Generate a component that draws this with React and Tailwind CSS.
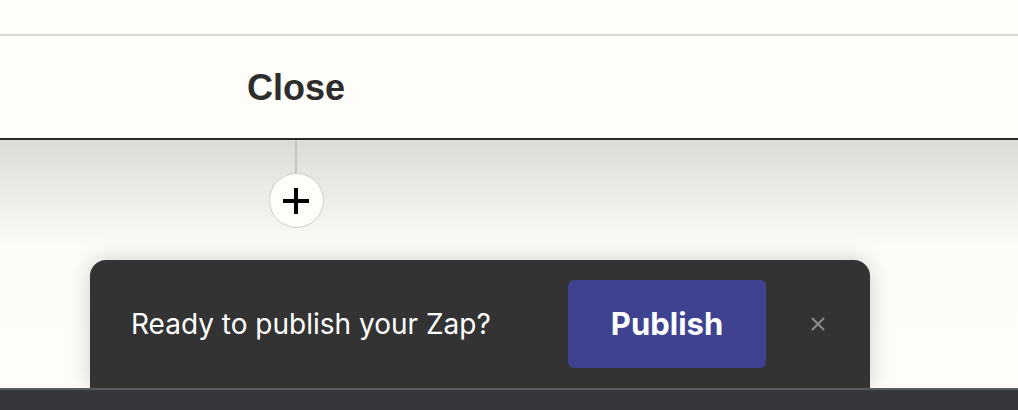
export default function App() {
  return (
    <div
      className="relative h-[410px] w-[1018px] overflow-hidden bg-[#fffdf9]"
      style={{ fontFamily: "Inter, 'Liberation Sans', sans-serif" }}
    >
      <div className="h-[36px] border-b-2 border-[#d6d5d1]" />

      <div className="flex h-[104px] border-b-2 border-[#2a2a28]">
        <div className="flex w-[592px] items-center justify-center pt-[2px]">
          <span
            className="text-[36px] font-bold text-[#2d2d2d]"
            style={{ fontFamily: "'Liberation Sans', Arial, sans-serif" }}
          >
            Close
          </span>
        </div>
      </div>

      <div className="h-[270px] bg-gradient-to-b from-[#dcdbd7] via-[#fdfcf8] via-40% to-[#fffdf9]">
        <div className="flex w-[592px] flex-col items-center">
          <div className="h-[33px] w-[2px] bg-[#c4c4c2]" />
          <div className="flex h-[55px] w-[55px] items-center justify-center rounded-full border-[1.5px] border-[#cfcecb] bg-[#fffdf9]">
            <svg width="34" height="34" viewBox="0 0 34 34" fill="none">
              <path d="M17 4V30M4 17H30" stroke="#000" strokeWidth="4" />
            </svg>
          </div>
        </div>
      </div>

      <div className="absolute left-[90px] top-[260px] flex h-[128px] w-[780px] items-start rounded-t-[16px] bg-[#333333] pt-5 pl-[41px] shadow-[0_0_24px_rgba(0,0,0,0.18)]">
        <div className="flex h-[88px] flex-1 items-center text-[28px] text-white">
          Ready to publish your Zap?
        </div>
        <button className="flex h-[88px] w-[198px] items-center justify-center rounded-[6px] bg-[#3e4290] text-[31px] font-bold text-white">
          Publish
        </button>
        <div className="flex h-[88px] w-[104px] items-center justify-center">
          <svg width="16" height="16" viewBox="0 0 16 16" fill="none">
            <path d="M2 2L14 14M14 2L2 14" stroke="#8a8a8a" strokeWidth="2.2" />
          </svg>
        </div>
      </div>

      <div className="absolute bottom-0 left-0 h-[22px] w-full border-t-2 border-[#5b5b5e] bg-[#35373a]" />
    </div>
  );
}
